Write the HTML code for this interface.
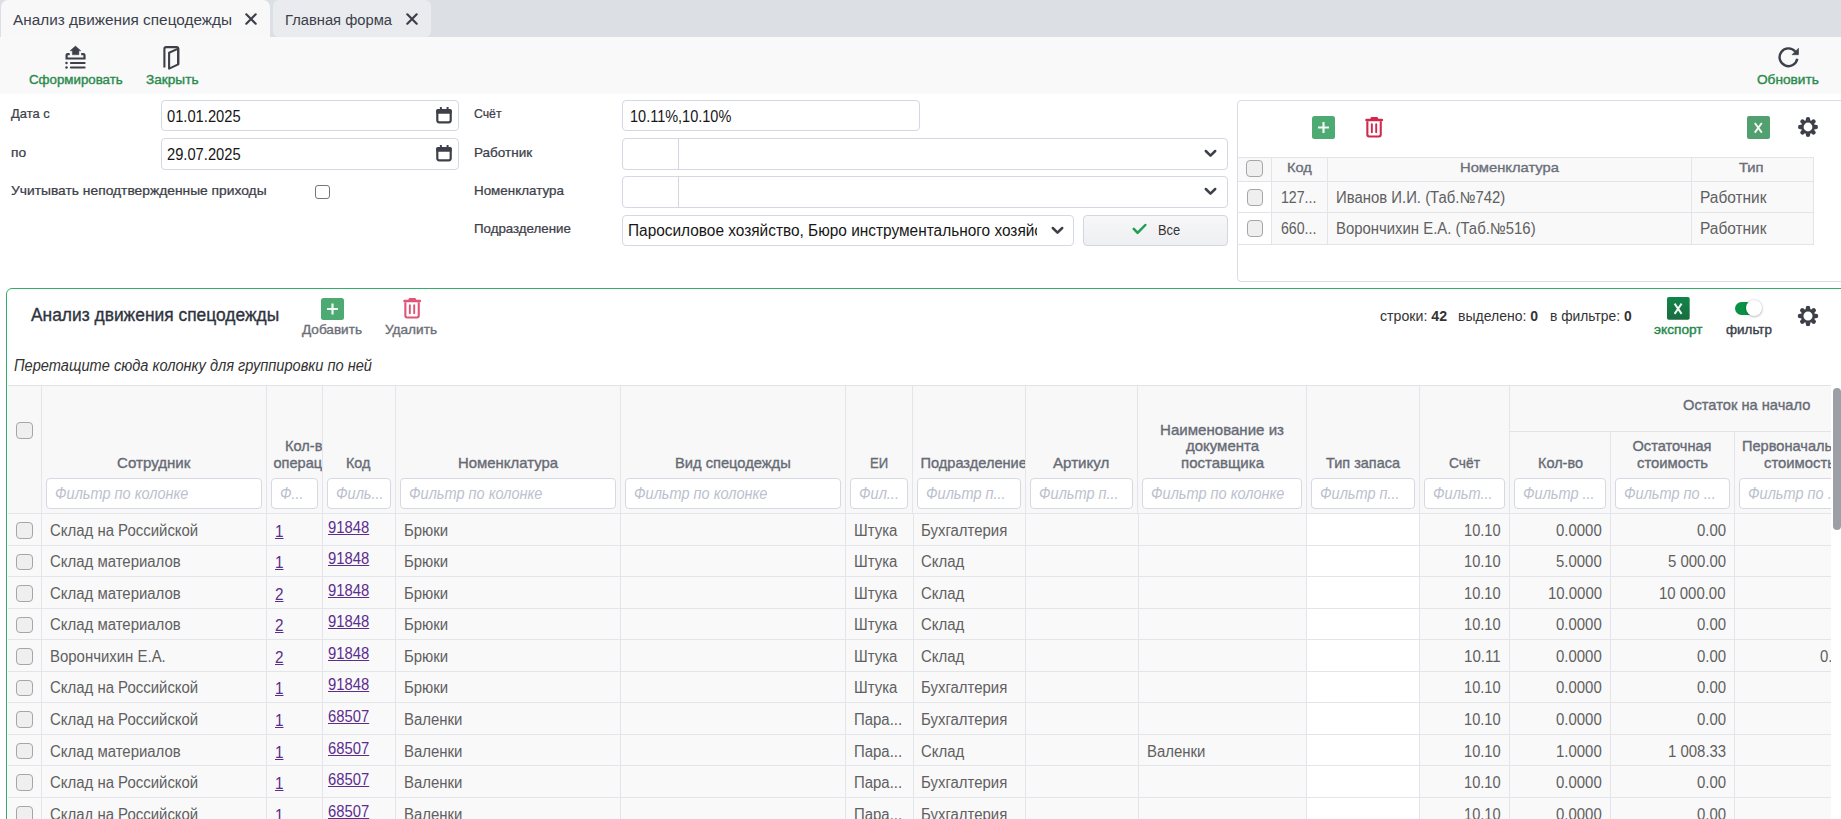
<!DOCTYPE html><html><head><meta charset="utf-8"><style>*{margin:0;padding:0}html,body{width:1841px;height:819px;overflow:hidden;background:#fff;position:relative;font-family:"Liberation Sans", sans-serif}
.t{position:absolute;white-space:pre;line-height:1;font-family:"Liberation Sans", sans-serif}
.c{position:absolute;overflow:hidden}</style></head><body><div style="position:absolute;left:0px;top:0px;width:1841px;height:37px;background:#dcdfe4"></div>
<div style="position:absolute;left:1px;top:0px;width:269px;height:37px;background:#f8f8f9;border-radius:7px 7px 0 0"></div>
<div style="position:absolute;left:273px;top:0px;width:158px;height:36.5px;background:#e9ebee;border-radius:6px"></div>
<div class="t" style="left:13.00px;top:12.00px;font-size:15.5px;font-weight:400;color:#3b3f4a;font-style:normal;transform:scaleX(0.9897);transform-origin:0 0">Анализ движения спецодежды</div>
<div class="t" style="left:285.00px;top:12.00px;font-size:15.5px;font-weight:400;color:#3b3f4a;font-style:normal;transform:scaleX(0.9505);transform-origin:0 0">Главная форма</div>
<svg style="position:absolute;left:245px;top:13.2px" width="12" height="12" viewBox="0 0 12 12"><path d="M1.3 1.3L10.7 10.7M10.7 1.3L1.3 10.7" stroke="#3d4049" stroke-width="2.2" stroke-linecap="round"/></svg>
<svg style="position:absolute;left:405.8px;top:13.2px" width="12" height="12" viewBox="0 0 12 12"><path d="M1.3 1.3L10.7 10.7M10.7 1.3L1.3 10.7" stroke="#3d4049" stroke-width="2.2" stroke-linecap="round"/></svg>
<div style="position:absolute;left:0px;top:37px;width:1841px;height:57px;background:#f9f9f9"></div>
<svg style="position:absolute;left:64px;top:45px" width="23" height="25" viewBox="0 0 23 25"><path d="M6 5.8L11.45 1L16.9 5.8H14.9V9.8H8.3V5.8Z" fill="#3d4049" stroke="#3d4049" stroke-width="0.4" stroke-linejoin="round"/><path d="M5.7 9.1H3.8Q2.6 9.1 2.6 10.3V13.5H20.5V10.3Q20.5 9.1 19.3 9.1H17.2" fill="none" stroke="#3d4049" stroke-width="2.2"/><g fill="#3d4049"><circle cx="2.5" cy="18" r="1.25"/><circle cx="2.5" cy="22.5" r="1.25"/></g><path d="M6.9 18H20.6M6.9 22.5H20.6" stroke="#3d4049" stroke-width="2.1" stroke-linecap="round"/></svg>
<div class="t" style="left:28.50px;top:74.00px;font-size:12.6px;font-weight:400;color:#2b8b4d;font-style:normal;-webkit-text-stroke:0.385px #2b8b4d;transform:scaleX(1.0554);transform-origin:0 0">Сформировать</div>
<svg style="position:absolute;left:162px;top:45px" width="19" height="26" viewBox="0 0 19 26"><g fill="none" stroke="#3d4049" stroke-width="2.1" stroke-linejoin="round"><path d="M2.4 22.4V3.8Q2.4 2.1 4.1 2.1H14.5Q16.2 2.1 16.2 3.8V19.3"/><path d="M7.1 7.7L16.2 3.6V19.4L7.1 23.6Z"/></g></svg>
<div class="t" style="left:145.50px;top:74.00px;font-size:12.6px;font-weight:400;color:#2b8b4d;font-style:normal;-webkit-text-stroke:0.385px #2b8b4d;transform:scaleX(1.0821);transform-origin:0 0">Закрыть</div>
<svg style="position:absolute;left:1777px;top:46px" width="23" height="23" viewBox="0 0 23 23"><path d="M20.26 12.75A8.9 8.9 0 1 1 18.3 5.5" fill="none" stroke="#3d4049" stroke-width="2.4"/><path d="M15.0 8.7H21.5V2.2Z" fill="#3d4049" stroke="#3d4049" stroke-width="0.6" stroke-linejoin="round"/></svg>
<div class="t" style="left:1757.00px;top:74.00px;font-size:12.6px;font-weight:400;color:#2b8b4d;font-style:normal;-webkit-text-stroke:0.385px #2b8b4d;transform:scaleX(1.0836);transform-origin:0 0">Обновить</div>
<div class="t" style="left:11.20px;top:108.00px;font-size:12.6px;font-weight:400;color:#3d4049;font-style:normal;-webkit-text-stroke:0.245px #3d4049;transform:scaleX(1.0269);transform-origin:0 0">Дата с</div>
<div class="t" style="left:11.20px;top:147.00px;font-size:12.6px;font-weight:400;color:#3d4049;font-style:normal;-webkit-text-stroke:0.245px #3d4049;transform:scaleX(1.0920);transform-origin:0 0">по</div>
<div class="t" style="left:11.20px;top:185.00px;font-size:12.6px;font-weight:400;color:#3d4049;font-style:normal;-webkit-text-stroke:0.245px #3d4049;transform:scaleX(1.0966);transform-origin:0 0">Учитывать неподтвержденные приходы</div>
<div style="position:absolute;left:315.3px;top:185px;width:14.5px;height:14.300000000000011px;box-sizing:border-box;border:1px solid #767676;border-radius:3px;background:#fff"></div>
<div style="position:absolute;left:161px;top:100px;width:298px;height:31px;box-sizing:border-box;border:1px solid #d5d8e2;border-radius:4px;background:#fff"></div>
<div style="position:absolute;left:161px;top:138px;width:298px;height:32px;box-sizing:border-box;border:1px solid #d5d8e2;border-radius:4px;background:#fff"></div>
<svg style="position:absolute;left:435px;top:106px" width="18" height="19" viewBox="0 0 18 19"><g fill="#3d4049"><rect x="4.9" y="0.9" width="2" height="3.5" rx="0.6"/><rect x="11.6" y="0.9" width="2" height="3.5" rx="0.6"/></g><rect x="2.3" y="4.1" width="13.4" height="12.2" rx="2" fill="none" stroke="#3d4049" stroke-width="2.2"/><rect x="1.2" y="3" width="15.6" height="4.7" rx="1.5" fill="#3d4049"/></svg>
<svg style="position:absolute;left:435px;top:144px" width="18" height="19" viewBox="0 0 18 19"><g fill="#3d4049"><rect x="4.9" y="0.9" width="2" height="3.5" rx="0.6"/><rect x="11.6" y="0.9" width="2" height="3.5" rx="0.6"/></g><rect x="2.3" y="4.1" width="13.4" height="12.2" rx="2" fill="none" stroke="#3d4049" stroke-width="2.2"/><rect x="1.2" y="3" width="15.6" height="4.7" rx="1.5" fill="#3d4049"/></svg>
<div class="t" style="left:166.70px;top:109.00px;font-size:16px;font-weight:400;color:#161616;font-style:normal;transform:scaleX(0.9191);transform-origin:0 0">01.01.2025</div>
<div class="t" style="left:166.70px;top:147.00px;font-size:16px;font-weight:400;color:#161616;font-style:normal;transform:scaleX(0.9191);transform-origin:0 0">29.07.2025</div>
<div class="t" style="left:473.50px;top:108.00px;font-size:12.6px;font-weight:400;color:#3d4049;font-style:normal;-webkit-text-stroke:0.245px #3d4049;transform:scaleX(0.9718);transform-origin:0 0">Счёт</div>
<div class="t" style="left:473.50px;top:147.00px;font-size:12.6px;font-weight:400;color:#3d4049;font-style:normal;-webkit-text-stroke:0.245px #3d4049;transform:scaleX(1.0719);transform-origin:0 0">Работник</div>
<div class="t" style="left:473.50px;top:185.00px;font-size:12.6px;font-weight:400;color:#3d4049;font-style:normal;-webkit-text-stroke:0.245px #3d4049;transform:scaleX(1.0635);transform-origin:0 0">Номенклатура</div>
<div class="t" style="left:473.50px;top:223.00px;font-size:12.6px;font-weight:400;color:#3d4049;font-style:normal;-webkit-text-stroke:0.245px #3d4049;transform:scaleX(1.0558);transform-origin:0 0">Подразделение</div>
<div style="position:absolute;left:622px;top:100px;width:298px;height:31px;box-sizing:border-box;border:1px solid #d5d8e2;border-radius:4px;background:#fff"></div>
<div class="t" style="left:629.70px;top:109.00px;font-size:16px;font-weight:400;color:#161616;font-style:normal;transform:scaleX(0.9061);transform-origin:0 0">10.11%,10.10%</div>
<div style="position:absolute;left:622px;top:138px;width:606px;height:32px;box-sizing:border-box;border:1px solid #d5d8e2;border-radius:4px;background:#fff"></div>
<div style="position:absolute;left:678px;top:139px;width:1px;height:30px;background:#d3d6df"></div>
<svg style="position:absolute;left:1204px;top:149.0px" width="13" height="9" viewBox="0 0 13 9"><path d="M1.8 2L6.5 6.7L11.2 2" fill="none" stroke="#3d4049" stroke-width="2.5" stroke-linecap="round" stroke-linejoin="round"/></svg>
<div style="position:absolute;left:622px;top:176px;width:606px;height:32px;box-sizing:border-box;border:1px solid #d5d8e2;border-radius:4px;background:#fff"></div>
<div style="position:absolute;left:678px;top:177px;width:1px;height:30px;background:#d3d6df"></div>
<svg style="position:absolute;left:1204px;top:187.0px" width="13" height="9" viewBox="0 0 13 9"><path d="M1.8 2L6.5 6.7L11.2 2" fill="none" stroke="#3d4049" stroke-width="2.5" stroke-linecap="round" stroke-linejoin="round"/></svg>
<div style="position:absolute;left:622px;top:215px;width:452px;height:31px;box-sizing:border-box;border:1px solid #d5d8e2;border-radius:4px;background:#fff"></div>
<div class="c" style="left:622px;top:215px;width:414.5999999999999px;height:31px"><div style="position:absolute;left:-622px;top:-215px"><div class="t" style="left:628.20px;top:223.00px;font-size:16px;font-weight:400;color:#161616;font-style:normal;transform:scaleX(0.9631);transform-origin:0 0">Паросиловое хозяйство, Бюро инструментального хозяйства</div></div></div>
<svg style="position:absolute;left:1051px;top:225.8px" width="13" height="9" viewBox="0 0 13 9"><path d="M1.8 2L6.5 6.7L11.2 2" fill="none" stroke="#3d4049" stroke-width="2.5" stroke-linecap="round" stroke-linejoin="round"/></svg>
<div style="position:absolute;left:1083px;top:215px;width:145px;height:31px;box-sizing:border-box;border:1px solid #d3d6df;border-radius:4px;background:linear-gradient(#f7f7f8,#eeeff1)"></div>
<svg style="position:absolute;left:1131.5px;top:222.8px" width="15" height="12" viewBox="0 0 15 12"><path d="M1.8 5.9L5.6 9.9L13.3 2" fill="none" stroke="#1f9d55" stroke-width="2.5" stroke-linecap="round" stroke-linejoin="round"/></svg>
<div class="t" style="left:1158.00px;top:222.00px;font-size:15px;font-weight:400;color:#333;font-style:normal;transform:scaleX(0.8585);transform-origin:0 0">Все</div>
<div style="position:absolute;left:1237px;top:100px;width:663px;height:182px;box-sizing:border-box;border:1px solid #dadce5;border-radius:4px;background:#fff"></div>
<svg style="position:absolute;left:1312px;top:116px" width="23" height="23" viewBox="0 0 23 23"><rect width="23" height="23" rx="2.5" fill="#4caa72"/><path d="M11.5 6V17M6 11.5H17" stroke="#f2f8f4" stroke-width="2.2"/></svg>
<svg style="position:absolute;left:1364.9px;top:117.4px" width="19" height="22" viewBox="0 0 19 22"><g fill="none" stroke="#d2284c"><path d="M6.4 2.2Q6.6 0.6 8.2 0.6H10.4Q12 0.6 12.2 2.2" stroke-width="2.2" fill="#d2284c"/><path d="M1.5 2.9H16.9" stroke-width="2.5" stroke-linecap="round"/><path d="M2.35 4.2V17.6Q2.35 19.45 4.2 19.45H13.9Q15.75 19.45 15.75 17.6V4.2" stroke-width="2.1"/><path d="M6.85 7.3V15.3M11.2 7.3V15.3" stroke-width="1.9" stroke-linecap="round"/></g></svg>
<svg style="position:absolute;left:1747px;top:116px" width="23" height="23" viewBox="0 0 23 23"><rect width="23" height="23" rx="2" fill="#52a070"/><path d="M7.8 7L14.8 16.6M14.8 7L7.8 16.6" stroke="#f4f8f5" stroke-width="1.9"/></svg>
<svg style="position:absolute;left:1796.3px;top:115.3px" width="24" height="24" viewBox="0 0 24 24"><circle cx="12" cy="12" r="5.70" fill="none" stroke="#3d4049" stroke-width="2.60"/><path d="M19.00 12.00L19.80 12.00M16.95 16.95L17.52 17.52M12.00 19.00L12.00 19.80M7.05 16.95L6.48 17.52M5.00 12.00L4.20 12.00M7.05 7.05L6.48 6.48M12.00 5.00L12.00 4.20M16.95 7.05L17.52 6.48" stroke="#3d4049" stroke-width="4.40" stroke-linecap="round"/></svg>
<div style="position:absolute;left:1238px;top:157.4px;width:575px;height:24.0px;background:#f9f9fa"></div>
<div style="position:absolute;left:1271px;top:181.4px;width:542px;height:63.19999999999999px;background:#f9f9fa"></div>
<div style="position:absolute;left:1238px;top:157.4px;width:575px;height:1.0px;background:#e3e4ea"></div>
<div style="position:absolute;left:1238px;top:181.4px;width:575px;height:1.0px;background:#e3e4ea"></div>
<div style="position:absolute;left:1238px;top:212.4px;width:575px;height:1.0px;background:#e3e4ea"></div>
<div style="position:absolute;left:1238px;top:244.2px;width:575px;height:1.0px;background:#e3e4ea"></div>
<div style="position:absolute;left:1271px;top:157.4px;width:1px;height:87.19999999999999px;background:#e3e4ea"></div>
<div style="position:absolute;left:1327px;top:157.4px;width:1px;height:87.19999999999999px;background:#e3e4ea"></div>
<div style="position:absolute;left:1691px;top:157.4px;width:1px;height:87.19999999999999px;background:#e3e4ea"></div>
<div style="position:absolute;left:1812.5px;top:157.4px;width:1.0px;height:87.19999999999999px;background:#e3e4ea"></div>
<div style="position:absolute;left:1246px;top:160.2px;width:16.59999999999991px;height:16.599999999999994px;box-sizing:border-box;border:1px solid #a5a6a8;border-radius:4px;background:#efefef"></div>
<div style="position:absolute;left:1246.6px;top:189.2px;width:16.59999999999991px;height:16.599999999999994px;box-sizing:border-box;border:1px solid #a5a6a8;border-radius:4px;background:#efefef"></div>
<div style="position:absolute;left:1246.6px;top:220.2px;width:16.59999999999991px;height:16.599999999999994px;box-sizing:border-box;border:1px solid #a5a6a8;border-radius:4px;background:#efefef"></div>
<div class="t" style="left:1286.90px;top:161.00px;font-size:13.5px;font-weight:400;color:#6b6f78;font-style:normal;-webkit-text-stroke:0.350px #6b6f78;transform:scaleX(1.0805);transform-origin:0 0">Код</div>
<div class="t" style="left:1459.50px;top:161.00px;font-size:13.5px;font-weight:400;color:#6b6f78;font-style:normal;-webkit-text-stroke:0.350px #6b6f78;transform:scaleX(1.0926);transform-origin:0 0">Номенклатура</div>
<div class="t" style="left:1739.30px;top:161.00px;font-size:13.5px;font-weight:400;color:#6b6f78;font-style:normal;-webkit-text-stroke:0.350px #6b6f78;transform:scaleX(1.0926);transform-origin:0 0">Тип</div>
<div class="t" style="left:1280.50px;top:190.00px;font-size:16px;font-weight:400;color:#606060;font-style:normal;transform:scaleX(0.8843);transform-origin:0 0">127...</div>
<div class="t" style="left:1280.50px;top:221.00px;font-size:16px;font-weight:400;color:#606060;font-style:normal;transform:scaleX(0.8843);transform-origin:0 0">660...</div>
<div class="t" style="left:1336.00px;top:190.00px;font-size:16px;font-weight:400;color:#606060;font-style:normal;transform:scaleX(0.9312);transform-origin:0 0">Иванов И.И. (Таб.№742)</div>
<div class="t" style="left:1336.00px;top:221.00px;font-size:16px;font-weight:400;color:#606060;font-style:normal;transform:scaleX(0.9307);transform-origin:0 0">Ворончихин Е.А. (Таб.№516)</div>
<div class="t" style="left:1700.30px;top:190.00px;font-size:16px;font-weight:400;color:#606060;font-style:normal;transform:scaleX(0.9657);transform-origin:0 0">Работник</div>
<div class="t" style="left:1700.30px;top:221.00px;font-size:16px;font-weight:400;color:#606060;font-style:normal;transform:scaleX(0.9657);transform-origin:0 0">Работник</div>
<div style="position:absolute;left:6.2px;top:288.2px;width:1893.8px;height:611.8px;box-sizing:border-box;border:1.6px solid #32ad69;border-radius:6px;background:#fff"></div>
<div class="t" style="left:30.50px;top:307.00px;font-size:17.5px;font-weight:400;color:#2f3440;font-style:normal;-webkit-text-stroke:0.350px #2f3440;transform:scaleX(0.9935);transform-origin:0 0">Анализ движения спецодежды</div>
<svg style="position:absolute;left:321px;top:297.5px" width="23" height="22" viewBox="0 0 23 22"><rect width="23" height="22" rx="2.5" fill="#4caa72"/><path d="M11.5 5.5V16.5M6 11H17" stroke="#f2f8f4" stroke-width="2.2"/></svg>
<div class="t" style="left:302.00px;top:324.00px;font-size:12.4px;font-weight:400;color:#6c6f76;font-style:normal;-webkit-text-stroke:0.350px #6c6f76;transform:scaleX(1.0956);transform-origin:0 0">Добавить</div>
<svg style="position:absolute;left:402.8px;top:297.8px" width="19" height="22" viewBox="0 0 19 22"><g fill="none" stroke="#e05477"><path d="M6.4 2.2Q6.6 0.6 8.2 0.6H10.4Q12 0.6 12.2 2.2" stroke-width="2.2" fill="#e05477"/><path d="M1.5 2.9H16.9" stroke-width="2.5" stroke-linecap="round"/><path d="M2.35 4.2V17.6Q2.35 19.45 4.2 19.45H13.9Q15.75 19.45 15.75 17.6V4.2" stroke-width="2.1"/><path d="M6.85 7.3V15.3M11.2 7.3V15.3" stroke-width="1.9" stroke-linecap="round"/></g></svg>
<div class="t" style="left:385.00px;top:324.00px;font-size:12.4px;font-weight:400;color:#6c6f76;font-style:normal;-webkit-text-stroke:0.350px #6c6f76;transform:scaleX(1.0991);transform-origin:0 0">Удалить</div>
<div class="t" style="left:1379.70px;top:308.00px;font-size:15px;font-weight:400;color:#333;font-style:normal;transform:scaleX(0.9432);transform-origin:0 0">строки: <b>42</b></div>
<div class="t" style="left:1458.00px;top:308.00px;font-size:15px;font-weight:400;color:#333;font-style:normal;transform:scaleX(0.9329);transform-origin:0 0">выделено: <b>0</b></div>
<div class="t" style="left:1549.80px;top:308.00px;font-size:15px;font-weight:400;color:#333;font-style:normal;transform:scaleX(0.9220);transform-origin:0 0">в фильтре: <b>0</b></div>
<svg style="position:absolute;left:1667.2px;top:297.1px" width="23" height="22.7" viewBox="0 0 23 22.7"><defs><linearGradient id="xg" x1="0" y1="0" x2="0" y2="1"><stop offset="0" stop-color="#118549"/><stop offset="1" stop-color="#1b6c40"/></linearGradient></defs><rect width="22.7" height="22.7" rx="1.8" fill="url(#xg)"/><path d="M7.6 6.6L14.6 16.9M14.6 6.6L7.6 16.9" stroke="#f4f8f5" stroke-width="1.9"/></svg>
<div class="t" style="left:1654.00px;top:324.00px;font-size:12.6px;font-weight:400;color:#23884a;font-style:normal;-webkit-text-stroke:0.385px #23884a;transform:scaleX(1.0872);transform-origin:0 0">экспорт</div>
<div style="position:absolute;left:1735px;top:302px;width:23px;height:13.199999999999989px;background:#0a9148;border-radius:7px"></div>
<div style="position:absolute;left:1746px;top:299.6px;width:16px;height:16px;border-radius:50%;background:#fff;box-shadow:0 0.5px 2.5px rgba(0,0,0,.4)"></div>
<div class="t" style="left:1725.60px;top:324.00px;font-size:12.6px;font-weight:400;color:#3b3f4a;font-style:normal;-webkit-text-stroke:0.385px #3b3f4a;transform:scaleX(1.0674);transform-origin:0 0">фильтр</div>
<svg style="position:absolute;left:1796.3px;top:304px" width="24" height="24" viewBox="0 0 24 24"><circle cx="12" cy="12" r="5.87" fill="none" stroke="#3d4049" stroke-width="2.68"/><path d="M19.21 12.00L20.03 12.00M17.10 17.10L17.68 17.68M12.00 19.21L12.00 20.03M6.90 17.10L6.32 17.68M4.79 12.00L3.97 12.00M6.90 6.90L6.32 6.32M12.00 4.79L12.00 3.97M17.10 6.90L17.68 6.32" stroke="#3d4049" stroke-width="4.53" stroke-linecap="round"/></svg>
<div class="t" style="left:13.80px;top:358.00px;font-size:16px;font-weight:400;color:#333;font-style:italic;transform:scaleX(0.9137);transform-origin:0 0">Перетащите сюда колонку для группировки по ней</div>
<div style="position:absolute;left:7.7px;top:385px;width:1823.3px;height:128px;background:#f8f8f9"></div>
<div style="position:absolute;left:7.7px;top:513px;width:1823.3px;height:306px;background:#f9f9fa"></div>
<div style="position:absolute;left:1307px;top:513px;width:112px;height:306px;background:#fff"></div>
<div style="position:absolute;left:7.7px;top:385px;width:1823.3px;height:1px;background:#e2e3e9"></div>
<div style="position:absolute;left:1509px;top:431px;width:322px;height:1px;background:#e2e3e9"></div>
<div style="position:absolute;left:7.7px;top:513px;width:1823.3px;height:1px;background:#e4e5ea"></div>
<div style="position:absolute;left:7.7px;top:545px;width:1823.3px;height:1px;background:#e4e5ea"></div>
<div style="position:absolute;left:7.7px;top:576px;width:1823.3px;height:1px;background:#e4e5ea"></div>
<div style="position:absolute;left:7.7px;top:608px;width:1823.3px;height:1px;background:#e4e5ea"></div>
<div style="position:absolute;left:7.7px;top:639px;width:1823.3px;height:1px;background:#e4e5ea"></div>
<div style="position:absolute;left:7.7px;top:671px;width:1823.3px;height:1px;background:#e4e5ea"></div>
<div style="position:absolute;left:7.7px;top:702px;width:1823.3px;height:1px;background:#e4e5ea"></div>
<div style="position:absolute;left:7.7px;top:734px;width:1823.3px;height:1px;background:#e4e5ea"></div>
<div style="position:absolute;left:7.7px;top:765px;width:1823.3px;height:1px;background:#e4e5ea"></div>
<div style="position:absolute;left:7.7px;top:797px;width:1823.3px;height:1px;background:#e4e5ea"></div>
<div style="position:absolute;left:7.7px;top:828px;width:1823.3px;height:1px;background:#e4e5ea"></div>
<div style="position:absolute;left:41px;top:385px;width:1px;height:128px;background:#e4e5ea"></div>
<div style="position:absolute;left:266px;top:385px;width:1px;height:128px;background:#e4e5ea"></div>
<div style="position:absolute;left:322px;top:385px;width:1px;height:128px;background:#e4e5ea"></div>
<div style="position:absolute;left:395px;top:385px;width:1px;height:128px;background:#e4e5ea"></div>
<div style="position:absolute;left:620px;top:385px;width:1px;height:128px;background:#e4e5ea"></div>
<div style="position:absolute;left:845px;top:385px;width:1px;height:128px;background:#e4e5ea"></div>
<div style="position:absolute;left:912px;top:385px;width:1px;height:128px;background:#e4e5ea"></div>
<div style="position:absolute;left:1025px;top:385px;width:1px;height:128px;background:#e4e5ea"></div>
<div style="position:absolute;left:1137px;top:385px;width:1px;height:128px;background:#e4e5ea"></div>
<div style="position:absolute;left:1306px;top:385px;width:1px;height:128px;background:#e4e5ea"></div>
<div style="position:absolute;left:1419px;top:385px;width:1px;height:128px;background:#e4e5ea"></div>
<div style="position:absolute;left:1509px;top:385px;width:1px;height:128px;background:#e4e5ea"></div>
<div style="position:absolute;left:1610px;top:432px;width:1px;height:81px;background:#e4e5ea"></div>
<div style="position:absolute;left:1734px;top:432px;width:1px;height:81px;background:#e4e5ea"></div>
<div style="position:absolute;left:41px;top:513px;width:1px;height:306px;background:#e4e5ea"></div>
<div style="position:absolute;left:266px;top:513px;width:1px;height:306px;background:#e4e5ea"></div>
<div style="position:absolute;left:322px;top:513px;width:1px;height:306px;background:#e4e5ea"></div>
<div style="position:absolute;left:395px;top:513px;width:1px;height:306px;background:#e4e5ea"></div>
<div style="position:absolute;left:620px;top:513px;width:1px;height:306px;background:#e4e5ea"></div>
<div style="position:absolute;left:845px;top:513px;width:1px;height:306px;background:#e4e5ea"></div>
<div style="position:absolute;left:913px;top:513px;width:1px;height:306px;background:#e4e5ea"></div>
<div style="position:absolute;left:1025px;top:513px;width:1px;height:306px;background:#e4e5ea"></div>
<div style="position:absolute;left:1138px;top:513px;width:1px;height:306px;background:#e4e5ea"></div>
<div style="position:absolute;left:1306px;top:513px;width:1px;height:306px;background:#e4e5ea"></div>
<div style="position:absolute;left:1419px;top:513px;width:1px;height:306px;background:#e4e5ea"></div>
<div style="position:absolute;left:1509px;top:513px;width:1px;height:306px;background:#e4e5ea"></div>
<div style="position:absolute;left:1610px;top:513px;width:1px;height:306px;background:#e4e5ea"></div>
<div style="position:absolute;left:1734px;top:513px;width:1px;height:306px;background:#e4e5ea"></div>
<div style="position:absolute;left:16px;top:422px;width:16.6px;height:16.600000000000023px;box-sizing:border-box;border:1px solid #a5a6a8;border-radius:4px;background:#efefef"></div>
<div style="position:absolute;left:16px;top:522.0px;width:16.6px;height:16.600000000000023px;box-sizing:border-box;border:1px solid #a5a6a8;border-radius:4px;background:#efefef"></div>
<div style="position:absolute;left:16px;top:553.55px;width:16.6px;height:16.600000000000023px;box-sizing:border-box;border:1px solid #a5a6a8;border-radius:4px;background:#efefef"></div>
<div style="position:absolute;left:16px;top:585.1px;width:16.6px;height:16.600000000000023px;box-sizing:border-box;border:1px solid #a5a6a8;border-radius:4px;background:#efefef"></div>
<div style="position:absolute;left:16px;top:616.65px;width:16.6px;height:16.600000000000023px;box-sizing:border-box;border:1px solid #a5a6a8;border-radius:4px;background:#efefef"></div>
<div style="position:absolute;left:16px;top:648.2px;width:16.6px;height:16.600000000000023px;box-sizing:border-box;border:1px solid #a5a6a8;border-radius:4px;background:#efefef"></div>
<div style="position:absolute;left:16px;top:679.75px;width:16.6px;height:16.600000000000023px;box-sizing:border-box;border:1px solid #a5a6a8;border-radius:4px;background:#efefef"></div>
<div style="position:absolute;left:16px;top:711.3px;width:16.6px;height:16.600000000000023px;box-sizing:border-box;border:1px solid #a5a6a8;border-radius:4px;background:#efefef"></div>
<div style="position:absolute;left:16px;top:742.85px;width:16.6px;height:16.600000000000023px;box-sizing:border-box;border:1px solid #a5a6a8;border-radius:4px;background:#efefef"></div>
<div style="position:absolute;left:16px;top:774.4px;width:16.6px;height:16.600000000000023px;box-sizing:border-box;border:1px solid #a5a6a8;border-radius:4px;background:#efefef"></div>
<div style="position:absolute;left:16px;top:805.95px;width:16.6px;height:16.600000000000023px;box-sizing:border-box;border:1px solid #a5a6a8;border-radius:4px;background:#efefef"></div>
<div class="t" style="left:116.80px;top:456.00px;font-size:14.6px;font-weight:400;color:#676b74;font-style:normal;-webkit-text-stroke:0.350px #676b74;transform:scaleX(1.0352);transform-origin:0 0">Сотрудник</div>
<div class="c" style="left:266.8px;top:386px;width:55.39999999999998px;height:127px"><div style="position:absolute;left:-266.8px;top:-386px"><div class="t" style="left:285.00px;top:439.00px;font-size:14.6px;font-weight:400;color:#676b74;font-style:normal;-webkit-text-stroke:0.350px #676b74">Кол-во</div></div></div>
<div class="c" style="left:266.8px;top:386px;width:55.39999999999998px;height:127px"><div style="position:absolute;left:-266.8px;top:-386px"><div class="t" style="left:273.40px;top:456.00px;font-size:14.6px;font-weight:400;color:#676b74;font-style:normal;-webkit-text-stroke:0.350px #676b74">операций</div></div></div>
<div class="t" style="left:346.40px;top:456.00px;font-size:14.6px;font-weight:400;color:#676b74;font-style:normal;-webkit-text-stroke:0.350px #676b74;transform:scaleX(0.9834);transform-origin:0 0">Код</div>
<div class="t" style="left:457.90px;top:456.00px;font-size:14.6px;font-weight:400;color:#676b74;font-style:normal;-webkit-text-stroke:0.350px #676b74;transform:scaleX(1.0209);transform-origin:0 0">Номенклатура</div>
<div class="t" style="left:674.55px;top:456.00px;font-size:14.6px;font-weight:400;color:#676b74;font-style:normal;-webkit-text-stroke:0.350px #676b74;transform:scaleX(1.0061);transform-origin:0 0">Вид спецодежды</div>
<div class="t" style="left:869.50px;top:456.00px;font-size:14.6px;font-weight:400;color:#676b74;font-style:normal;-webkit-text-stroke:0.350px #676b74;transform:scaleX(0.8995);transform-origin:0 0">ЕИ</div>
<div class="c" style="left:913px;top:386px;width:112px;height:127px"><div style="position:absolute;left:-913px;top:-386px"><div class="t" style="left:920.50px;top:456.00px;font-size:14.6px;font-weight:400;color:#676b74;font-style:normal;-webkit-text-stroke:0.350px #676b74">Подразделение</div></div></div>
<div class="t" style="left:1053.00px;top:456.00px;font-size:14.6px;font-weight:400;color:#676b74;font-style:normal;-webkit-text-stroke:0.350px #676b74;transform:scaleX(1.0366);transform-origin:0 0">Артикул</div>
<div class="t" style="left:1160.00px;top:423.00px;font-size:14.6px;font-weight:400;color:#676b74;font-style:normal;-webkit-text-stroke:0.350px #676b74;transform:scaleX(1.0327);transform-origin:0 0">Наименование из</div>
<div class="t" style="left:1185.50px;top:439.00px;font-size:14.6px;font-weight:400;color:#676b74;font-style:normal;-webkit-text-stroke:0.350px #676b74;transform:scaleX(1.0257);transform-origin:0 0">документа</div>
<div class="t" style="left:1180.50px;top:456.00px;font-size:14.6px;font-weight:400;color:#676b74;font-style:normal;-webkit-text-stroke:0.350px #676b74;transform:scaleX(1.0287);transform-origin:0 0">поставщика</div>
<div class="t" style="left:1326.00px;top:456.00px;font-size:14.6px;font-weight:400;color:#676b74;font-style:normal;-webkit-text-stroke:0.350px #676b74;transform:scaleX(0.9916);transform-origin:0 0">Тип запаса</div>
<div class="t" style="left:1449.00px;top:456.00px;font-size:14.6px;font-weight:400;color:#676b74;font-style:normal;-webkit-text-stroke:0.350px #676b74;transform:scaleX(0.9457);transform-origin:0 0">Счёт</div>
<div class="t" style="left:1537.50px;top:456.00px;font-size:14.6px;font-weight:400;color:#676b74;font-style:normal;-webkit-text-stroke:0.350px #676b74;transform:scaleX(0.9914);transform-origin:0 0">Кол-во</div>
<div class="t" style="left:1632.50px;top:439.00px;font-size:14.6px;font-weight:400;color:#676b74;font-style:normal;-webkit-text-stroke:0.350px #676b74">Остаточная</div>
<div class="t" style="left:1636.50px;top:456.00px;font-size:14.6px;font-weight:400;color:#676b74;font-style:normal;-webkit-text-stroke:0.350px #676b74;transform:scaleX(1.0168);transform-origin:0 0">стоимость</div>
<div class="c" style="left:1734.5px;top:386px;width:96.5px;height:127px"><div style="position:absolute;left:-1734.5px;top:-386px"><div class="t" style="left:1742.00px;top:439.00px;font-size:14.6px;font-weight:400;color:#676b74;font-style:normal;-webkit-text-stroke:0.350px #676b74">Первоначальная</div></div></div>
<div class="c" style="left:1734.5px;top:386px;width:96.5px;height:127px"><div style="position:absolute;left:-1734.5px;top:-386px"><div class="t" style="left:1764.00px;top:456.00px;font-size:14.6px;font-weight:400;color:#676b74;font-style:normal;-webkit-text-stroke:0.350px #676b74;transform:scaleX(1.0168);transform-origin:0 0">стоимость</div></div></div>
<div class="t" style="left:1682.60px;top:398.00px;font-size:14.6px;font-weight:400;color:#676b74;font-style:normal;-webkit-text-stroke:0.350px #676b74;transform:scaleX(1.0060);transform-origin:0 0">Остаток на начало</div>
<div style="position:absolute;left:46px;top:478.2px;width:216px;height:30.600000000000023px;box-sizing:border-box;border:1px solid #d6d9e1;border-radius:4px;background:#fff"></div>
<div class="t" style="left:54.70px;top:486.00px;font-size:16px;font-weight:400;color:#bcc1cd;font-style:italic;transform:scaleX(0.9080);transform-origin:0 0">Фильтр по колонке</div>
<div style="position:absolute;left:271px;top:478.2px;width:47px;height:30.600000000000023px;box-sizing:border-box;border:1px solid #d6d9e1;border-radius:4px;background:#fff"></div>
<div class="t" style="left:279.70px;top:486.00px;font-size:16px;font-weight:400;color:#bcc1cd;font-style:italic;transform:scaleX(0.9080);transform-origin:0 0">Ф...</div>
<div style="position:absolute;left:327px;top:478.2px;width:64px;height:30.600000000000023px;box-sizing:border-box;border:1px solid #d6d9e1;border-radius:4px;background:#fff"></div>
<div class="t" style="left:335.70px;top:486.00px;font-size:16px;font-weight:400;color:#bcc1cd;font-style:italic;transform:scaleX(0.9080);transform-origin:0 0">Филь...</div>
<div style="position:absolute;left:400px;top:478.2px;width:216px;height:30.600000000000023px;box-sizing:border-box;border:1px solid #d6d9e1;border-radius:4px;background:#fff"></div>
<div class="t" style="left:408.70px;top:486.00px;font-size:16px;font-weight:400;color:#bcc1cd;font-style:italic;transform:scaleX(0.9080);transform-origin:0 0">Фильтр по колонке</div>
<div style="position:absolute;left:625px;top:478.2px;width:216px;height:30.600000000000023px;box-sizing:border-box;border:1px solid #d6d9e1;border-radius:4px;background:#fff"></div>
<div class="t" style="left:633.70px;top:486.00px;font-size:16px;font-weight:400;color:#bcc1cd;font-style:italic;transform:scaleX(0.9080);transform-origin:0 0">Фильтр по колонке</div>
<div style="position:absolute;left:850px;top:478.2px;width:58px;height:30.600000000000023px;box-sizing:border-box;border:1px solid #d6d9e1;border-radius:4px;background:#fff"></div>
<div class="t" style="left:858.70px;top:486.00px;font-size:16px;font-weight:400;color:#bcc1cd;font-style:italic;transform:scaleX(0.9080);transform-origin:0 0">Фил...</div>
<div style="position:absolute;left:917px;top:478.2px;width:104px;height:30.600000000000023px;box-sizing:border-box;border:1px solid #d6d9e1;border-radius:4px;background:#fff"></div>
<div class="t" style="left:925.70px;top:486.00px;font-size:16px;font-weight:400;color:#bcc1cd;font-style:italic;transform:scaleX(0.9080);transform-origin:0 0">Фильтр п...</div>
<div style="position:absolute;left:1030px;top:478.2px;width:103px;height:30.600000000000023px;box-sizing:border-box;border:1px solid #d6d9e1;border-radius:4px;background:#fff"></div>
<div class="t" style="left:1038.70px;top:486.00px;font-size:16px;font-weight:400;color:#bcc1cd;font-style:italic;transform:scaleX(0.9080);transform-origin:0 0">Фильтр п...</div>
<div style="position:absolute;left:1142px;top:478.2px;width:160px;height:30.600000000000023px;box-sizing:border-box;border:1px solid #d6d9e1;border-radius:4px;background:#fff"></div>
<div class="t" style="left:1150.70px;top:486.00px;font-size:16px;font-weight:400;color:#bcc1cd;font-style:italic;transform:scaleX(0.9080);transform-origin:0 0">Фильтр по колонке</div>
<div style="position:absolute;left:1311px;top:478.2px;width:104px;height:30.600000000000023px;box-sizing:border-box;border:1px solid #d6d9e1;border-radius:4px;background:#fff"></div>
<div class="t" style="left:1319.70px;top:486.00px;font-size:16px;font-weight:400;color:#bcc1cd;font-style:italic;transform:scaleX(0.9080);transform-origin:0 0">Фильтр п...</div>
<div style="position:absolute;left:1424px;top:478.2px;width:81px;height:30.600000000000023px;box-sizing:border-box;border:1px solid #d6d9e1;border-radius:4px;background:#fff"></div>
<div class="t" style="left:1432.70px;top:486.00px;font-size:16px;font-weight:400;color:#bcc1cd;font-style:italic;transform:scaleX(0.9080);transform-origin:0 0">Фильт...</div>
<div style="position:absolute;left:1514px;top:478.2px;width:92px;height:30.600000000000023px;box-sizing:border-box;border:1px solid #d6d9e1;border-radius:4px;background:#fff"></div>
<div class="t" style="left:1522.70px;top:486.00px;font-size:16px;font-weight:400;color:#bcc1cd;font-style:italic;transform:scaleX(0.9080);transform-origin:0 0">Фильтр ...</div>
<div style="position:absolute;left:1615px;top:478.2px;width:115px;height:30.600000000000023px;box-sizing:border-box;border:1px solid #d6d9e1;border-radius:4px;background:#fff"></div>
<div class="t" style="left:1623.70px;top:486.00px;font-size:16px;font-weight:400;color:#bcc1cd;font-style:italic;transform:scaleX(0.9080);transform-origin:0 0">Фильтр по ...</div>
<div style="position:absolute;left:1739px;top:478.2px;width:161px;height:30.600000000000023px;box-sizing:border-box;border:1px solid #d6d9e1;border-radius:4px;background:#fff"></div>
<div class="t" style="left:1747.70px;top:486.00px;font-size:16px;font-weight:400;color:#bcc1cd;font-style:italic;transform:scaleX(0.9080);transform-origin:0 0">Фильтр по ...</div>
<div style="position:absolute;left:1831px;top:385px;width:10px;height:434px;background:#fff"></div>
<div style="position:absolute;left:1833.2px;top:388.4px;width:7.599999999999909px;height:141.39999999999998px;background:#9d9fa6;border-radius:4px"></div>
<div class="t" style="left:49.60px;top:523.00px;font-size:16px;font-weight:400;color:#606060;font-style:normal;transform:scaleX(0.9340);transform-origin:0 0">Склад на Российской</div>
<div class="t" style="left:274.60px;top:524.00px;font-size:16px;font-weight:400;color:#5b2d8e;font-style:normal;text-decoration:underline;text-underline-offset:0.6px;transform:scaleX(0.9544);transform-origin:0 0">1</div>
<div class="t" style="left:327.50px;top:520.00px;font-size:16px;font-weight:400;color:#5b2d8e;font-style:normal;text-decoration:underline;text-underline-offset:0.6px;transform:scaleX(0.9258);transform-origin:0 0">91848</div>
<div class="t" style="left:404.00px;top:523.00px;font-size:16px;font-weight:400;color:#606060;font-style:normal;transform:scaleX(0.9340);transform-origin:0 0">Брюки</div>
<div class="t" style="left:854.00px;top:523.00px;font-size:16px;font-weight:400;color:#606060;font-style:normal;transform:scaleX(0.9340);transform-origin:0 0">Штука</div>
<div class="t" style="left:921.00px;top:523.00px;font-size:16px;font-weight:400;color:#606060;font-style:normal;transform:scaleX(0.9340);transform-origin:0 0">Бухгалтерия</div>
<div class="t" style="left:1463.90px;top:523.00px;font-size:16px;font-weight:400;color:#606060;font-style:normal;transform:scaleX(0.9139);transform-origin:0 0">10.10</div>
<div class="t" style="left:1556.09px;top:523.00px;font-size:16px;font-weight:400;color:#606060;font-style:normal;transform:scaleX(0.9340);transform-origin:0 0">0.0000</div>
<div class="t" style="left:1696.71px;top:523.00px;font-size:16px;font-weight:400;color:#606060;font-style:normal;transform:scaleX(0.9340);transform-origin:0 0">0.00</div>
<div class="t" style="left:49.60px;top:554.00px;font-size:16px;font-weight:400;color:#606060;font-style:normal;transform:scaleX(0.9340);transform-origin:0 0">Склад материалов</div>
<div class="t" style="left:274.60px;top:555.00px;font-size:16px;font-weight:400;color:#5b2d8e;font-style:normal;text-decoration:underline;text-underline-offset:0.6px;transform:scaleX(0.9544);transform-origin:0 0">1</div>
<div class="t" style="left:327.50px;top:551.00px;font-size:16px;font-weight:400;color:#5b2d8e;font-style:normal;text-decoration:underline;text-underline-offset:0.6px;transform:scaleX(0.9258);transform-origin:0 0">91848</div>
<div class="t" style="left:404.00px;top:554.00px;font-size:16px;font-weight:400;color:#606060;font-style:normal;transform:scaleX(0.9340);transform-origin:0 0">Брюки</div>
<div class="t" style="left:854.00px;top:554.00px;font-size:16px;font-weight:400;color:#606060;font-style:normal;transform:scaleX(0.9340);transform-origin:0 0">Штука</div>
<div class="t" style="left:921.00px;top:554.00px;font-size:16px;font-weight:400;color:#606060;font-style:normal;transform:scaleX(0.9340);transform-origin:0 0">Склад</div>
<div class="t" style="left:1463.90px;top:554.00px;font-size:16px;font-weight:400;color:#606060;font-style:normal;transform:scaleX(0.9139);transform-origin:0 0">10.10</div>
<div class="t" style="left:1556.09px;top:554.00px;font-size:16px;font-weight:400;color:#606060;font-style:normal;transform:scaleX(0.9340);transform-origin:0 0">5.0000</div>
<div class="t" style="left:1667.63px;top:554.00px;font-size:16px;font-weight:400;color:#606060;font-style:normal;transform:scaleX(0.9340);transform-origin:0 0">5 000.00</div>
<div class="t" style="left:49.60px;top:586.00px;font-size:16px;font-weight:400;color:#606060;font-style:normal;transform:scaleX(0.9340);transform-origin:0 0">Склад материалов</div>
<div class="t" style="left:274.60px;top:587.00px;font-size:16px;font-weight:400;color:#5b2d8e;font-style:normal;text-decoration:underline;text-underline-offset:0.6px;transform:scaleX(0.9544);transform-origin:0 0">2</div>
<div class="t" style="left:327.50px;top:583.00px;font-size:16px;font-weight:400;color:#5b2d8e;font-style:normal;text-decoration:underline;text-underline-offset:0.6px;transform:scaleX(0.9258);transform-origin:0 0">91848</div>
<div class="t" style="left:404.00px;top:586.00px;font-size:16px;font-weight:400;color:#606060;font-style:normal;transform:scaleX(0.9340);transform-origin:0 0">Брюки</div>
<div class="t" style="left:854.00px;top:586.00px;font-size:16px;font-weight:400;color:#606060;font-style:normal;transform:scaleX(0.9340);transform-origin:0 0">Штука</div>
<div class="t" style="left:921.00px;top:586.00px;font-size:16px;font-weight:400;color:#606060;font-style:normal;transform:scaleX(0.9340);transform-origin:0 0">Склад</div>
<div class="t" style="left:1463.90px;top:586.00px;font-size:16px;font-weight:400;color:#606060;font-style:normal;transform:scaleX(0.9139);transform-origin:0 0">10.10</div>
<div class="t" style="left:1547.77px;top:586.00px;font-size:16px;font-weight:400;color:#606060;font-style:normal;transform:scaleX(0.9340);transform-origin:0 0">10.0000</div>
<div class="t" style="left:1659.31px;top:586.00px;font-size:16px;font-weight:400;color:#606060;font-style:normal;transform:scaleX(0.9340);transform-origin:0 0">10 000.00</div>
<div class="t" style="left:49.60px;top:617.00px;font-size:16px;font-weight:400;color:#606060;font-style:normal;transform:scaleX(0.9340);transform-origin:0 0">Склад материалов</div>
<div class="t" style="left:274.60px;top:618.00px;font-size:16px;font-weight:400;color:#5b2d8e;font-style:normal;text-decoration:underline;text-underline-offset:0.6px;transform:scaleX(0.9544);transform-origin:0 0">2</div>
<div class="t" style="left:327.50px;top:614.00px;font-size:16px;font-weight:400;color:#5b2d8e;font-style:normal;text-decoration:underline;text-underline-offset:0.6px;transform:scaleX(0.9258);transform-origin:0 0">91848</div>
<div class="t" style="left:404.00px;top:617.00px;font-size:16px;font-weight:400;color:#606060;font-style:normal;transform:scaleX(0.9340);transform-origin:0 0">Брюки</div>
<div class="t" style="left:854.00px;top:617.00px;font-size:16px;font-weight:400;color:#606060;font-style:normal;transform:scaleX(0.9340);transform-origin:0 0">Штука</div>
<div class="t" style="left:921.00px;top:617.00px;font-size:16px;font-weight:400;color:#606060;font-style:normal;transform:scaleX(0.9340);transform-origin:0 0">Склад</div>
<div class="t" style="left:1463.90px;top:617.00px;font-size:16px;font-weight:400;color:#606060;font-style:normal;transform:scaleX(0.9139);transform-origin:0 0">10.10</div>
<div class="t" style="left:1556.09px;top:617.00px;font-size:16px;font-weight:400;color:#606060;font-style:normal;transform:scaleX(0.9340);transform-origin:0 0">0.0000</div>
<div class="t" style="left:1696.71px;top:617.00px;font-size:16px;font-weight:400;color:#606060;font-style:normal;transform:scaleX(0.9340);transform-origin:0 0">0.00</div>
<div class="t" style="left:49.60px;top:649.00px;font-size:16px;font-weight:400;color:#606060;font-style:normal;transform:scaleX(0.9340);transform-origin:0 0">Ворончихин Е.А.</div>
<div class="t" style="left:274.60px;top:650.00px;font-size:16px;font-weight:400;color:#5b2d8e;font-style:normal;text-decoration:underline;text-underline-offset:0.6px;transform:scaleX(0.9544);transform-origin:0 0">2</div>
<div class="t" style="left:327.50px;top:646.00px;font-size:16px;font-weight:400;color:#5b2d8e;font-style:normal;text-decoration:underline;text-underline-offset:0.6px;transform:scaleX(0.9258);transform-origin:0 0">91848</div>
<div class="t" style="left:404.00px;top:649.00px;font-size:16px;font-weight:400;color:#606060;font-style:normal;transform:scaleX(0.9340);transform-origin:0 0">Брюки</div>
<div class="t" style="left:854.00px;top:649.00px;font-size:16px;font-weight:400;color:#606060;font-style:normal;transform:scaleX(0.9340);transform-origin:0 0">Штука</div>
<div class="t" style="left:921.00px;top:649.00px;font-size:16px;font-weight:400;color:#606060;font-style:normal;transform:scaleX(0.9340);transform-origin:0 0">Склад</div>
<div class="t" style="left:1463.90px;top:649.00px;font-size:16px;font-weight:400;color:#606060;font-style:normal;transform:scaleX(0.9419);transform-origin:0 0">10.11</div>
<div class="t" style="left:1556.09px;top:649.00px;font-size:16px;font-weight:400;color:#606060;font-style:normal;transform:scaleX(0.9340);transform-origin:0 0">0.0000</div>
<div class="t" style="left:1696.71px;top:649.00px;font-size:16px;font-weight:400;color:#606060;font-style:normal;transform:scaleX(0.9340);transform-origin:0 0">0.00</div>
<div class="t" style="left:49.60px;top:680.00px;font-size:16px;font-weight:400;color:#606060;font-style:normal;transform:scaleX(0.9340);transform-origin:0 0">Склад на Российской</div>
<div class="t" style="left:274.60px;top:681.00px;font-size:16px;font-weight:400;color:#5b2d8e;font-style:normal;text-decoration:underline;text-underline-offset:0.6px;transform:scaleX(0.9544);transform-origin:0 0">1</div>
<div class="t" style="left:327.50px;top:677.00px;font-size:16px;font-weight:400;color:#5b2d8e;font-style:normal;text-decoration:underline;text-underline-offset:0.6px;transform:scaleX(0.9258);transform-origin:0 0">91848</div>
<div class="t" style="left:404.00px;top:680.00px;font-size:16px;font-weight:400;color:#606060;font-style:normal;transform:scaleX(0.9340);transform-origin:0 0">Брюки</div>
<div class="t" style="left:854.00px;top:680.00px;font-size:16px;font-weight:400;color:#606060;font-style:normal;transform:scaleX(0.9340);transform-origin:0 0">Штука</div>
<div class="t" style="left:921.00px;top:680.00px;font-size:16px;font-weight:400;color:#606060;font-style:normal;transform:scaleX(0.9340);transform-origin:0 0">Бухгалтерия</div>
<div class="t" style="left:1463.90px;top:680.00px;font-size:16px;font-weight:400;color:#606060;font-style:normal;transform:scaleX(0.9139);transform-origin:0 0">10.10</div>
<div class="t" style="left:1556.09px;top:680.00px;font-size:16px;font-weight:400;color:#606060;font-style:normal;transform:scaleX(0.9340);transform-origin:0 0">0.0000</div>
<div class="t" style="left:1696.71px;top:680.00px;font-size:16px;font-weight:400;color:#606060;font-style:normal;transform:scaleX(0.9340);transform-origin:0 0">0.00</div>
<div class="t" style="left:49.60px;top:712.00px;font-size:16px;font-weight:400;color:#606060;font-style:normal;transform:scaleX(0.9340);transform-origin:0 0">Склад на Российской</div>
<div class="t" style="left:274.60px;top:713.00px;font-size:16px;font-weight:400;color:#5b2d8e;font-style:normal;text-decoration:underline;text-underline-offset:0.6px;transform:scaleX(0.9544);transform-origin:0 0">1</div>
<div class="t" style="left:327.50px;top:709.00px;font-size:16px;font-weight:400;color:#5b2d8e;font-style:normal;text-decoration:underline;text-underline-offset:0.6px;transform:scaleX(0.9258);transform-origin:0 0">68507</div>
<div class="t" style="left:404.00px;top:712.00px;font-size:16px;font-weight:400;color:#606060;font-style:normal;transform:scaleX(0.9340);transform-origin:0 0">Валенки</div>
<div class="t" style="left:854.00px;top:712.00px;font-size:16px;font-weight:400;color:#606060;font-style:normal;transform:scaleX(0.9340);transform-origin:0 0">Пара...</div>
<div class="t" style="left:921.00px;top:712.00px;font-size:16px;font-weight:400;color:#606060;font-style:normal;transform:scaleX(0.9340);transform-origin:0 0">Бухгалтерия</div>
<div class="t" style="left:1463.90px;top:712.00px;font-size:16px;font-weight:400;color:#606060;font-style:normal;transform:scaleX(0.9139);transform-origin:0 0">10.10</div>
<div class="t" style="left:1556.09px;top:712.00px;font-size:16px;font-weight:400;color:#606060;font-style:normal;transform:scaleX(0.9340);transform-origin:0 0">0.0000</div>
<div class="t" style="left:1696.71px;top:712.00px;font-size:16px;font-weight:400;color:#606060;font-style:normal;transform:scaleX(0.9340);transform-origin:0 0">0.00</div>
<div class="t" style="left:49.60px;top:744.00px;font-size:16px;font-weight:400;color:#606060;font-style:normal;transform:scaleX(0.9340);transform-origin:0 0">Склад материалов</div>
<div class="t" style="left:274.60px;top:745.00px;font-size:16px;font-weight:400;color:#5b2d8e;font-style:normal;text-decoration:underline;text-underline-offset:0.6px;transform:scaleX(0.9544);transform-origin:0 0">1</div>
<div class="t" style="left:327.50px;top:741.00px;font-size:16px;font-weight:400;color:#5b2d8e;font-style:normal;text-decoration:underline;text-underline-offset:0.6px;transform:scaleX(0.9258);transform-origin:0 0">68507</div>
<div class="t" style="left:404.00px;top:744.00px;font-size:16px;font-weight:400;color:#606060;font-style:normal;transform:scaleX(0.9340);transform-origin:0 0">Валенки</div>
<div class="t" style="left:854.00px;top:744.00px;font-size:16px;font-weight:400;color:#606060;font-style:normal;transform:scaleX(0.9340);transform-origin:0 0">Пара...</div>
<div class="t" style="left:921.00px;top:744.00px;font-size:16px;font-weight:400;color:#606060;font-style:normal;transform:scaleX(0.9340);transform-origin:0 0">Склад</div>
<div class="t" style="left:1147.00px;top:744.00px;font-size:16px;font-weight:400;color:#606060;font-style:normal;transform:scaleX(0.9340);transform-origin:0 0">Валенки</div>
<div class="t" style="left:1463.90px;top:744.00px;font-size:16px;font-weight:400;color:#606060;font-style:normal;transform:scaleX(0.9139);transform-origin:0 0">10.10</div>
<div class="t" style="left:1556.09px;top:744.00px;font-size:16px;font-weight:400;color:#606060;font-style:normal;transform:scaleX(0.9340);transform-origin:0 0">1.0000</div>
<div class="t" style="left:1667.63px;top:744.00px;font-size:16px;font-weight:400;color:#606060;font-style:normal;transform:scaleX(0.9340);transform-origin:0 0">1 008.33</div>
<div class="t" style="left:49.60px;top:775.00px;font-size:16px;font-weight:400;color:#606060;font-style:normal;transform:scaleX(0.9340);transform-origin:0 0">Склад на Российской</div>
<div class="t" style="left:274.60px;top:776.00px;font-size:16px;font-weight:400;color:#5b2d8e;font-style:normal;text-decoration:underline;text-underline-offset:0.6px;transform:scaleX(0.9544);transform-origin:0 0">1</div>
<div class="t" style="left:327.50px;top:772.00px;font-size:16px;font-weight:400;color:#5b2d8e;font-style:normal;text-decoration:underline;text-underline-offset:0.6px;transform:scaleX(0.9258);transform-origin:0 0">68507</div>
<div class="t" style="left:404.00px;top:775.00px;font-size:16px;font-weight:400;color:#606060;font-style:normal;transform:scaleX(0.9340);transform-origin:0 0">Валенки</div>
<div class="t" style="left:854.00px;top:775.00px;font-size:16px;font-weight:400;color:#606060;font-style:normal;transform:scaleX(0.9340);transform-origin:0 0">Пара...</div>
<div class="t" style="left:921.00px;top:775.00px;font-size:16px;font-weight:400;color:#606060;font-style:normal;transform:scaleX(0.9340);transform-origin:0 0">Бухгалтерия</div>
<div class="t" style="left:1463.90px;top:775.00px;font-size:16px;font-weight:400;color:#606060;font-style:normal;transform:scaleX(0.9139);transform-origin:0 0">10.10</div>
<div class="t" style="left:1556.09px;top:775.00px;font-size:16px;font-weight:400;color:#606060;font-style:normal;transform:scaleX(0.9340);transform-origin:0 0">0.0000</div>
<div class="t" style="left:1696.71px;top:775.00px;font-size:16px;font-weight:400;color:#606060;font-style:normal;transform:scaleX(0.9340);transform-origin:0 0">0.00</div>
<div class="t" style="left:49.60px;top:807.00px;font-size:16px;font-weight:400;color:#606060;font-style:normal;transform:scaleX(0.9340);transform-origin:0 0">Склад на Российской</div>
<div class="t" style="left:274.60px;top:808.00px;font-size:16px;font-weight:400;color:#5b2d8e;font-style:normal;text-decoration:underline;text-underline-offset:0.6px;transform:scaleX(0.9544);transform-origin:0 0">1</div>
<div class="t" style="left:327.50px;top:804.00px;font-size:16px;font-weight:400;color:#5b2d8e;font-style:normal;text-decoration:underline;text-underline-offset:0.6px;transform:scaleX(0.9258);transform-origin:0 0">68507</div>
<div class="t" style="left:404.00px;top:807.00px;font-size:16px;font-weight:400;color:#606060;font-style:normal;transform:scaleX(0.9340);transform-origin:0 0">Валенки</div>
<div class="t" style="left:854.00px;top:807.00px;font-size:16px;font-weight:400;color:#606060;font-style:normal;transform:scaleX(0.9340);transform-origin:0 0">Пара...</div>
<div class="t" style="left:921.00px;top:807.00px;font-size:16px;font-weight:400;color:#606060;font-style:normal;transform:scaleX(0.9340);transform-origin:0 0">Бухгалтерия</div>
<div class="t" style="left:1463.90px;top:807.00px;font-size:16px;font-weight:400;color:#606060;font-style:normal;transform:scaleX(0.9139);transform-origin:0 0">10.10</div>
<div class="t" style="left:1556.09px;top:807.00px;font-size:16px;font-weight:400;color:#606060;font-style:normal;transform:scaleX(0.9340);transform-origin:0 0">0.0000</div>
<div class="t" style="left:1696.71px;top:807.00px;font-size:16px;font-weight:400;color:#606060;font-style:normal;transform:scaleX(0.9340);transform-origin:0 0">0.00</div>
<div class="c" style="left:1734.5px;top:640px;width:96.5px;height:30px"><div style="position:absolute;left:-1734.5px;top:-640px"><div class="t" style="left:1820.00px;top:649.00px;font-size:16px;font-weight:400;color:#606060;font-style:normal;transform:scaleX(0.9340);transform-origin:0 0">0.00</div></div></div>
<div style="position:absolute;left:1831px;top:385px;width:2.2000000000000455px;height:434px;background:#fff"></div></body></html>
